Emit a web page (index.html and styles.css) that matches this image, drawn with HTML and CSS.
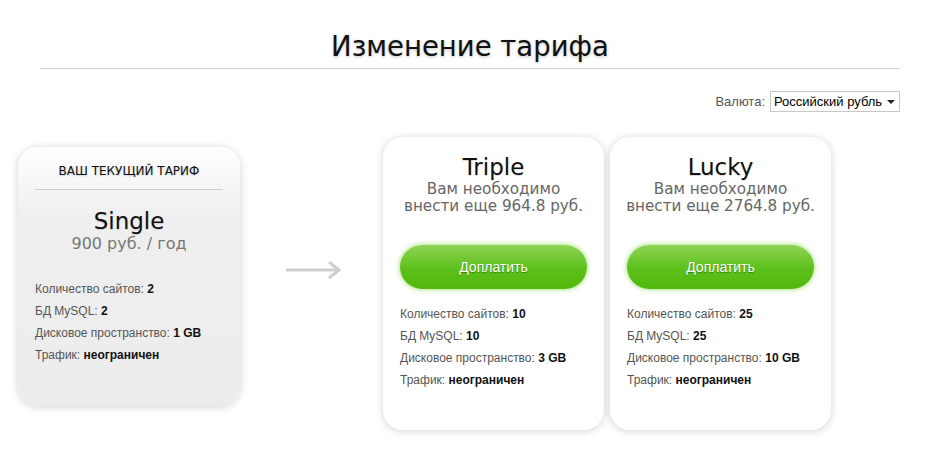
FILE: index.html
```html
<!DOCTYPE html>
<html lang="ru">
<head>
<meta charset="utf-8">
<title>Изменение тарифа</title>
<link rel="stylesheet" href="styles.css">
</head>
<body>
<div class="page">
  <h1 class="title">Изменение тарифа</h1>
  <div class="currency">
    <span class="currency-label">Валюта:</span>
    <div class="select"><span>Российский рубль</span><span class="caret"></span></div>
  </div>
  <div class="plans">
    <div class="card current">
      <div class="current-head">ВАШ ТЕКУЩИЙ ТАРИФ</div>
      <div class="plan-name single">Single</div>
      <div class="plan-price">900 руб. / год</div>
      <ul class="stats">
        <li>Количество сайтов: <b>2</b></li>
        <li>БД MySQL: <b>2</b></li>
        <li>Дисковое пространство: <b>1 GB</b></li>
        <li>Трафик: <b>неограничен</b></li>
      </ul>
    </div>
    <div class="arrow">
      <svg width="58" height="20" viewBox="0 0 58 20"><path d="M1 10 H54" stroke="#cfcfcf" stroke-width="3" fill="none"/><path d="M44 2 L54 10 L44 18" stroke="#cfcfcf" stroke-width="3" fill="none"/></svg>
    </div>
    <div class="offers">
      <div class="card offer">
        <div class="plan-name">Triple</div>
        <div class="plan-note">Вам необходимо<br>внести еще 964.8 руб.</div>
        <div class="pay">Доплатить</div>
        <ul class="stats">
          <li>Количество сайтов: <b>10</b></li>
          <li>БД MySQL: <b>10</b></li>
          <li>Дисковое пространство: <b>3 GB</b></li>
          <li>Трафик: <b>неограничен</b></li>
        </ul>
      </div>
      <div class="card offer">
        <div class="plan-name">Lucky</div>
        <div class="plan-note">Вам необходимо<br>внести еще 2764.8 руб.</div>
        <div class="pay">Доплатить</div>
        <ul class="stats">
          <li>Количество сайтов: <b>25</b></li>
          <li>БД MySQL: <b>25</b></li>
          <li>Дисковое пространство: <b>10 GB</b></li>
          <li>Трафик: <b>неограничен</b></li>
        </ul>
      </div>
    </div>
  </div>
</div>
</body>
</html>
```
FILE: styles.css
```css
html, body {
  margin: 0;
  padding: 0;
  background: #fff;
}
body {
  font-family: "Liberation Sans", Arial, sans-serif;
  color: #222;
}
.page {
  width: 940px;
  height: 460px;
  box-sizing: border-box;
  padding: 0 40px;
}
.title {
  margin: 0;
  padding-top: 28px;
  padding-bottom: 4px;
  text-align: center;
  font-family: "DejaVu Sans", sans-serif;
  font-weight: normal;
  font-size: 27.5px;
  line-height: 36px;
  color: #111;
  border-bottom: 1px solid #cfcfcf;
  text-shadow: 0 1px 3px rgba(0,0,0,0.25);
}
.currency {
  display: flex;
  justify-content: flex-end;
  align-items: center;
  gap: 5px;
  margin-top: 22px;
}
.currency-label {
  font-size: 13px;
  color: #555;
}
.select {
  width: 121px;
  height: 19px;
  border: 1px solid #c8c8c8;
  display: flex;
  align-items: center;
  justify-content: space-between;
  padding: 0 4px 0 3px;
  box-sizing: content-box;
  font-size: 13px;
  color: #000;
}
.caret {
  width: 0;
  height: 0;
  border-left: 4px solid transparent;
  border-right: 4px solid transparent;
  border-top: 4px solid #222;
}
.plans {
  display: flex;
  align-items: flex-start;
  margin-left: -22px;
  margin-top: 25px;
}
.card {
  width: 222px;
  box-sizing: border-box;
  border-radius: 20px;
  box-shadow: 0 1px 8px rgba(0,0,0,0.18);
  text-align: center;
}
.current {
  margin-top: 10px;
  background: linear-gradient(#ffffff 0px, #efefef 70px, #ececec 100%);
  padding: 16px 17px 40px;
}
.current-head {
  font-family: "DejaVu Sans", sans-serif;
  font-size: 12px;
  line-height: 16px;
  color: #111;
  padding-bottom: 10px;
  border-bottom: 1px solid #cfcfcf;
  text-shadow: 0 1px 2px rgba(0,0,0,0.2);
}
.plan-name {
  font-family: "DejaVu Sans", sans-serif;
  font-size: 23px;
  line-height: 28px;
  color: #111;
  text-shadow: 0 1px 1px rgba(0,0,0,0.15);
}
.single {
  margin-top: 18px;
  line-height: 26px;
}
.plan-price {
  font-family: "DejaVu Sans", sans-serif;
  font-size: 16px;
  line-height: 20px;
  color: #777;
}
.stats {
  list-style: none;
  margin: 0;
  padding: 0;
  text-align: left;
  font-size: 12px;
  line-height: 22px;
  color: #555;
}
.stats b {
  color: #111;
}
.current .stats {
  margin-top: 24px;
}
.arrow {
  width: 143px;
  display: flex;
  justify-content: center;
  padding-top: 123px;
  padding-left: 4px;
  box-sizing: border-box;
}
.offers {
  display: flex;
  align-items: flex-start;
  gap: 6px;
}
.offer {
  width: 221px;
  background: #fff;
  padding: 16px 17px 39px;
}
.plan-note {
  font-family: "DejaVu Sans", sans-serif;
  font-size: 15.2px;
  line-height: 17px;
  color: #666;
  margin: 0 -12px;
  white-space: nowrap;
}
.pay {
  margin-top: 30px;
  height: 44px;
  border-radius: 22px;
  background: linear-gradient(#8fd356, #5cc01a 55%, #50b80c);
  box-shadow: 0 0 4px 1px rgba(140, 220, 90, 0.7);
  color: #fff;
  font-size: 14px;
  line-height: 44px;
  text-shadow: 0 1px 1px rgba(0,0,0,0.35);
}
.offer .stats {
  margin-top: 14px;
}
```
